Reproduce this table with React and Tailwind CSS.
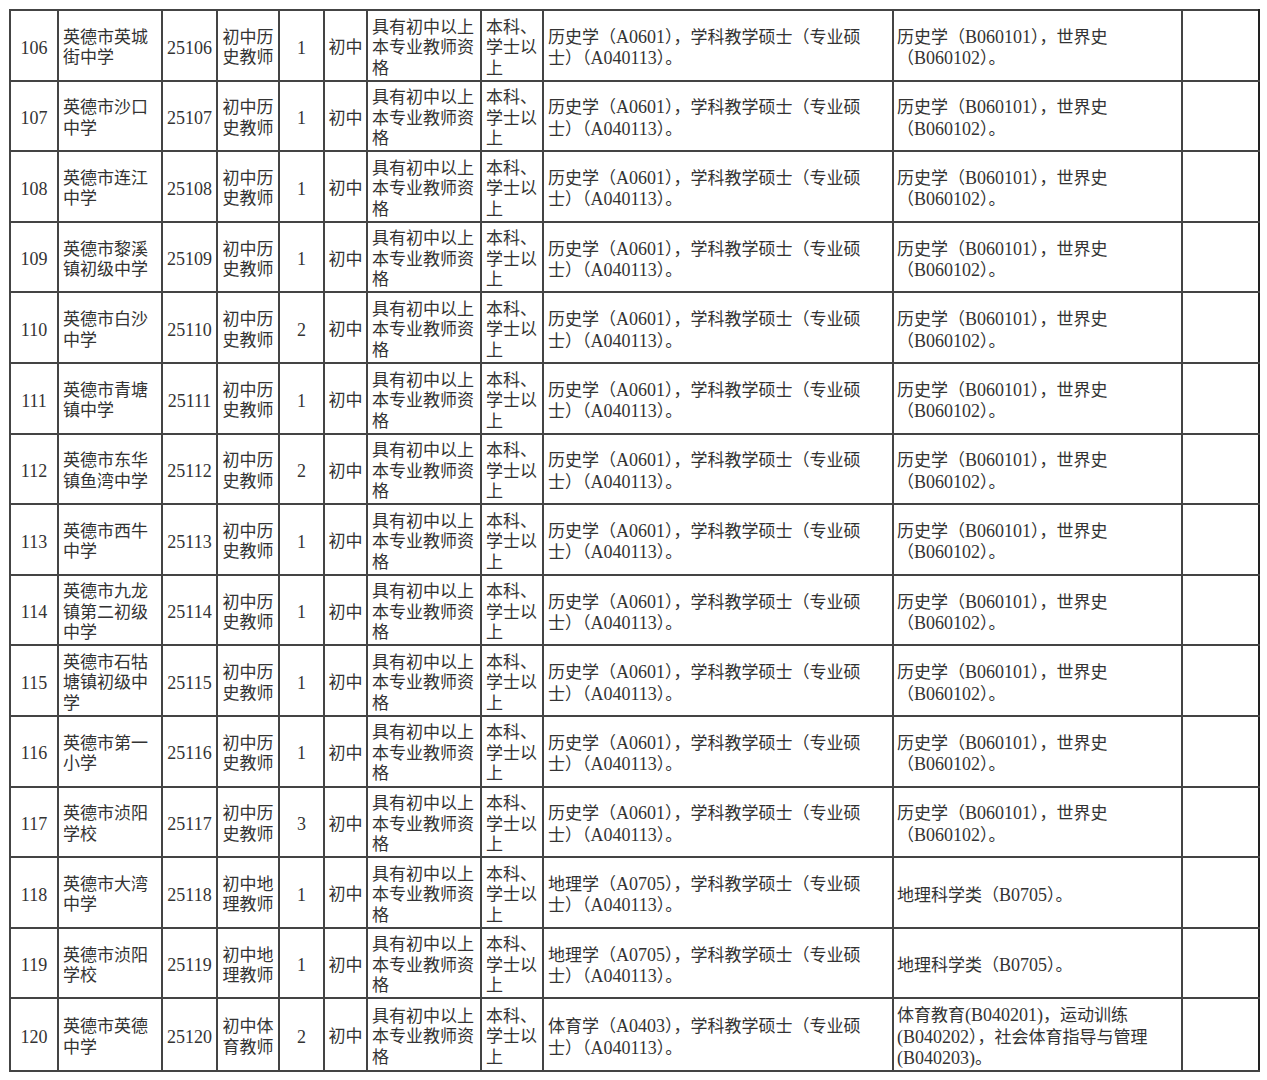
const histMajor = ['历史学（A0601），学科教学硕士（专业硕', '士）（A040113）。'];
const histDegree = ['历史学（B060101），世界史', '（B060102）。'];
const geoMajor = ['地理学（A0705），学科教学硕士（专业硕', '士）（A040113）。'];
const geoDegree = ['地理科学类（B0705）。'];

const rows = [
  { no: 106, school: ['英德市英城', '街中学'], post: ['初中历', '史教师'], n: 1, major: histMajor, degree: histDegree },
  { no: 107, school: ['英德市沙口', '中学'], post: ['初中历', '史教师'], n: 1, major: histMajor, degree: histDegree },
  { no: 108, school: ['英德市连江', '中学'], post: ['初中历', '史教师'], n: 1, major: histMajor, degree: histDegree },
  { no: 109, school: ['英德市黎溪', '镇初级中学'], post: ['初中历', '史教师'], n: 1, major: histMajor, degree: histDegree },
  { no: 110, school: ['英德市白沙', '中学'], post: ['初中历', '史教师'], n: 2, major: histMajor, degree: histDegree },
  { no: 111, school: ['英德市青塘', '镇中学'], post: ['初中历', '史教师'], n: 1, major: histMajor, degree: histDegree },
  { no: 112, school: ['英德市东华', '镇鱼湾中学'], post: ['初中历', '史教师'], n: 2, major: histMajor, degree: histDegree },
  { no: 113, school: ['英德市西牛', '中学'], post: ['初中历', '史教师'], n: 1, major: histMajor, degree: histDegree },
  { no: 114, school: ['英德市九龙', '镇第二初级', '中学'], post: ['初中历', '史教师'], n: 1, major: histMajor, degree: histDegree },
  { no: 115, school: ['英德市石牯', '塘镇初级中', '学'], post: ['初中历', '史教师'], n: 1, major: histMajor, degree: histDegree },
  { no: 116, school: ['英德市第一', '小学'], post: ['初中历', '史教师'], n: 1, major: histMajor, degree: histDegree },
  { no: 117, school: ['英德市浈阳', '学校'], post: ['初中历', '史教师'], n: 3, major: histMajor, degree: histDegree },
  { no: 118, school: ['英德市大湾', '中学'], post: ['初中地', '理教师'], n: 1, major: geoMajor, degree: geoDegree },
  { no: 119, school: ['英德市浈阳', '学校'], post: ['初中地', '理教师'], n: 1, major: geoMajor, degree: geoDegree },
  {
    no: 120,
    school: ['英德市英德', '中学'],
    post: ['初中体', '育教师'],
    n: 2,
    major: ['体育学（A0403），学科教学硕士（专业硕', '士）（A040113）。'],
    degree: ['体育教育(B040201)，运动训练', '(B040202），社会体育指导与管理', '(B040203)。'],
  },
];

// latin runs are a touch wider in the source scan, so bump them up
const Txt = ({ s }) =>
  String(s)
    .split(/([A-Za-z0-9()]+)/)
    .map((part, i) =>
      /^[A-Za-z0-9()]+$/.test(part) ? <span key={i} className="text-[18px]">{part}</span> : part
    );

const Lines = ({ lines }) =>
  lines.map((l, i) => (
    <div key={i} className="whitespace-nowrap">
      <Txt s={l} />
    </div>
  ));

const cell = 'border-2 border-[#444] align-middle pt-[6px]';

export default function App() {
  return (
    <div className="min-h-[1080px] bg-white pl-[9px] pt-[9px] text-[#333] text-[17px] leading-[20.5px] [font-family:'Liberation_Serif','Noto_Sans_CJK_SC',serif]">
      <table className="table-fixed border-collapse w-[1249px]">
        <colgroup>
          <col className="w-[48px]" />
          <col className="w-[104px]" />
          <col className="w-[55px]" />
          <col className="w-[62px]" />
          <col className="w-[45px]" />
          <col className="w-[43px]" />
          <col className="w-[114px]" />
          <col className="w-[62px]" />
          <col className="w-[350px]" />
          <col className="w-[289px]" />
          <col className="w-[77px]" />
        </colgroup>
        <tbody>
          {rows.map((r) => (
            <tr key={r.no} className="h-[70.6px]">
              <td className={`${cell} text-center`}><Txt s={r.no} /></td>
              <td className={`${cell} pl-[4px]`}><Lines lines={r.school} /></td>
              <td className={`${cell} text-center`}><Txt s={`25${r.no}`} /></td>
              <td className={`${cell} text-center`}><Lines lines={r.post} /></td>
              <td className={`${cell} text-center`}><Txt s={r.n} /></td>
              <td className={`${cell} text-center`}>初中</td>
              <td className={`${cell} pl-[4px]`}><Lines lines={['具有初中以上', '本专业教师资', '格']} /></td>
              <td className={`${cell} pl-[4px]`}><Lines lines={['本科、', '学士以', '上']} /></td>
              <td className={`${cell} pl-[4px]`}><Lines lines={r.major} /></td>
              <td className={`${cell} pl-[3px]`}><Lines lines={r.degree} /></td>
              <td className={`${cell} border-r-[#222]`}></td>
            </tr>
          ))}
        </tbody>
      </table>
    </div>
  );
}
